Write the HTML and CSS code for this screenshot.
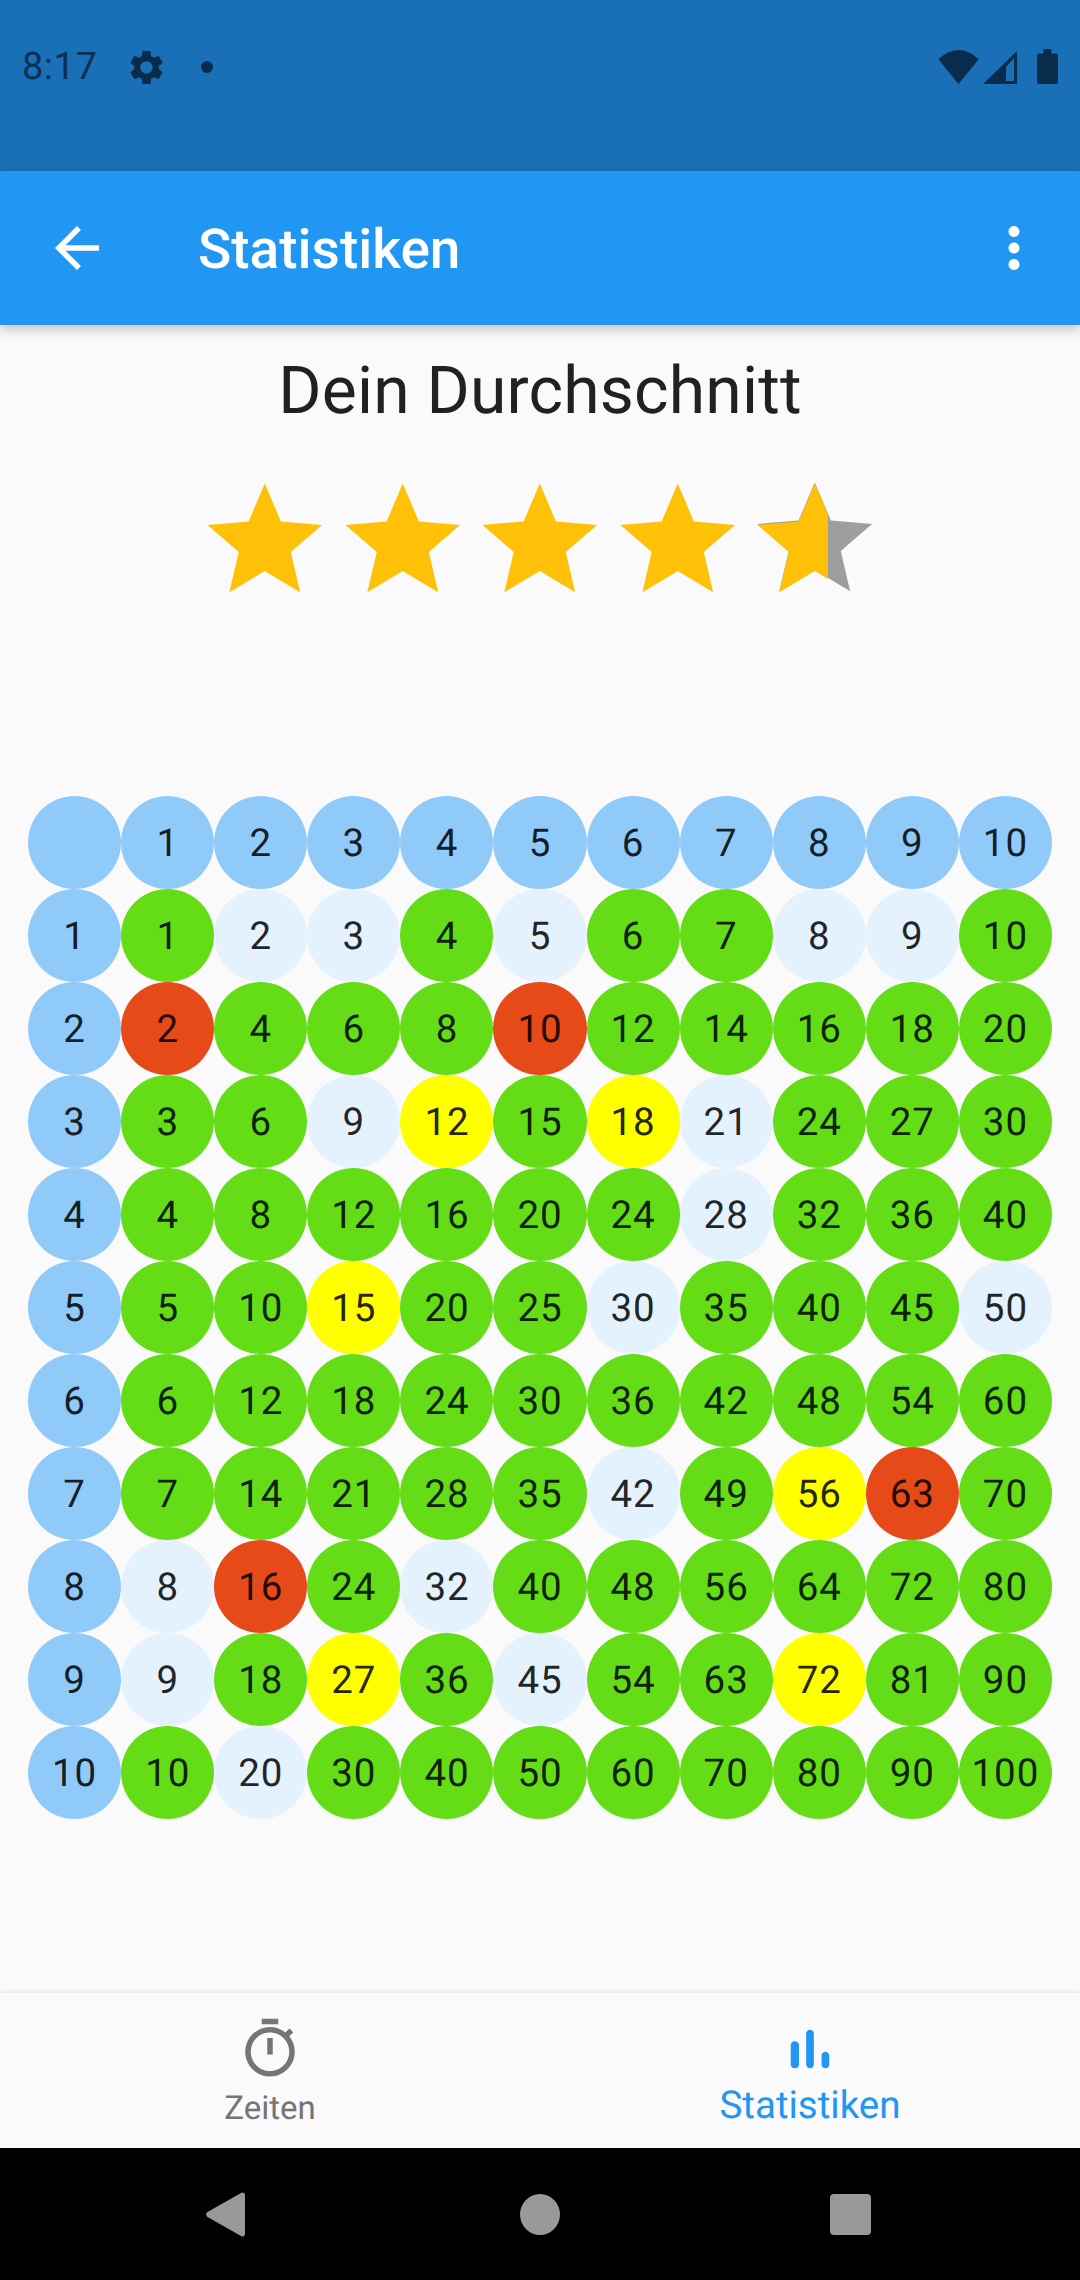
FILE: index.html
```html
<!DOCTYPE html>
<html lang="de">
  <head>
    <meta charset="UTF-8" />
    <title>Statistiken</title>
    <link rel="stylesheet" href="styles.css">
  </head>
  <body>
    <div class="screen">
      <!-- Statusleiste -->
      <div class="statusbar">
        <div class="status-left">
          <span class="clock">8:17</span>
          <svg class="status-gear" viewBox="0 0 24 24"><path d="M19.14 12.94c.04-.3.06-.61.06-.94 0-.32-.02-.64-.07-.94l2.03-1.58a.49.49 0 0 0 .12-.61l-1.92-3.32a.488.488 0 0 0-.59-.22l-2.39.96c-.5-.38-1.03-.7-1.62-.94l-.36-2.54a.484.484 0 0 0-.48-.41h-3.84c-.24 0-.43.17-.47.41l-.36 2.54c-.59.24-1.13.57-1.62.94l-2.39-.96c-.22-.08-.47 0-.59.22L2.74 8.87c-.12.21-.08.47.12.61l2.03 1.58c-.05.3-.09.63-.09.94s.02.64.07.94l-2.03 1.58a.49.49 0 0 0-.12.61l1.92 3.32c.12.22.37.29.59.22l2.39-.96c.5.38 1.03.7 1.62.94l.36 2.54c.05.24.24.41.48.41h3.84c.24 0 .44-.17.47-.41l.36-2.54c.59-.24 1.13-.56 1.62-.94l2.39.96c.22.08.47 0 .59-.22l1.92-3.32c.12-.22.07-.47-.12-.61l-2.01-1.58zM12 15.6c-1.98 0-3.6-1.62-3.6-3.6s1.62-3.6 3.6-3.6 3.6 1.62 3.6 3.6-1.62 3.6-3.6 3.6z"/></svg>
          <span class="status-dot"></span>
        </div>
        <div class="status-right">
          <svg class="status-wifi" viewBox="0 0 41 36"><path d="M20.5 35 L0.3 10.3 Q20.5 -8.3 40.7 10.3 Z"/></svg>
          <svg class="status-signal" viewBox="0 0 34 36"><path fill-rule="evenodd" d="M34 2 V35 H0 Z M31 9 L23 18 V32 H31 Z"/></svg>
          <svg class="status-battery" viewBox="0 0 21 36"><path d="M6.5 0 H14.5 V4.5 H19 A2 2 0 0 1 21 6.5 V33 A2 2 0 0 1 19 35 H2 A2 2 0 0 1 0 33 V6.5 A2 2 0 0 1 2 4.5 H6.5 Z"/></svg>
        </div>
      </div>

      <!-- Titelleiste -->
      <header class="appbar">
        <svg class="appbar-back" viewBox="0 0 24 24"><path d="M20 11H7.83l5.59-5.59L12 4l-8 8 8 8 1.41-1.41L7.83 13H20v-2z"/></svg>
        <h1 class="appbar-title">Statistiken</h1>
        <svg class="appbar-more" viewBox="0 0 24 24"><path d="M12 8c1.1 0 2-.9 2-2s-.9-2-2-2-2 .9-2 2 .9 2 2 2zm0 2c-1.1 0-2 .9-2 2s.9 2 2 2 2-.9 2-2-.9-2-2-2zm0 6c-1.1 0-2 .9-2 2s.9 2 2 2 2-.9 2-2-.9-2-2-2z"/></svg>
      </header>

      <main class="content">
        <h2 class="headline">Dein Durchschnitt</h2>

        <!-- Sterne -->
        <div class="stars">
          <svg class="star" viewBox="0 0 24 24"><path d="M12 17.27L18.18 21l-1.64-7.03L22 9.24l-7.19-.61L12 2 9.19 8.63 2 9.24l5.46 4.73L5.82 21z"/></svg>
          <svg class="star" viewBox="0 0 24 24"><path d="M12 17.27L18.18 21l-1.64-7.03L22 9.24l-7.19-.61L12 2 9.19 8.63 2 9.24l5.46 4.73L5.82 21z"/></svg>
          <svg class="star" viewBox="0 0 24 24"><path d="M12 17.27L18.18 21l-1.64-7.03L22 9.24l-7.19-.61L12 2 9.19 8.63 2 9.24l5.46 4.73L5.82 21z"/></svg>
          <svg class="star" viewBox="0 0 24 24"><path d="M12 17.27L18.18 21l-1.64-7.03L22 9.24l-7.19-.61L12 2 9.19 8.63 2 9.24l5.46 4.73L5.82 21z"/></svg>
          <div class="star-partial">
            <svg class="star star-empty" viewBox="0 0 24 24"><path d="M12 17.27L18.18 21l-1.64-7.03L22 9.24l-7.19-.61L12 2 9.19 8.63 2 9.24l5.46 4.73L5.82 21z"/></svg>
            <div class="star-fill">
              <svg class="star" viewBox="0 0 24 24"><path d="M12 17.27L18.18 21l-1.64-7.03L22 9.24l-7.19-.61L12 2 9.19 8.63 2 9.24l5.46 4.73L5.82 21z"/></svg>
            </div>
          </div>
        </div>

        <!-- Einmaleins-Tabelle -->
        <div class="table">
          <div class="cell head"></div><div class="cell head">1</div><div class="cell head">2</div><div class="cell head">3</div><div class="cell head">4</div><div class="cell head">5</div><div class="cell head">6</div><div class="cell head">7</div><div class="cell head">8</div><div class="cell head">9</div><div class="cell head">10</div>

          <div class="cell head">1</div><div class="cell good">1</div><div class="cell open">2</div><div class="cell open">3</div><div class="cell good">4</div><div class="cell open">5</div><div class="cell good">6</div><div class="cell good">7</div><div class="cell open">8</div><div class="cell open">9</div><div class="cell good">10</div>

          <div class="cell head">2</div><div class="cell bad">2</div><div class="cell good">4</div><div class="cell good">6</div><div class="cell good">8</div><div class="cell bad">10</div><div class="cell good">12</div><div class="cell good">14</div><div class="cell good">16</div><div class="cell good">18</div><div class="cell good">20</div>

          <div class="cell head">3</div><div class="cell good">3</div><div class="cell good">6</div><div class="cell open">9</div><div class="cell slow">12</div><div class="cell good">15</div><div class="cell slow">18</div><div class="cell open">21</div><div class="cell good">24</div><div class="cell good">27</div><div class="cell good">30</div>

          <div class="cell head">4</div><div class="cell good">4</div><div class="cell good">8</div><div class="cell good">12</div><div class="cell good">16</div><div class="cell good">20</div><div class="cell good">24</div><div class="cell open">28</div><div class="cell good">32</div><div class="cell good">36</div><div class="cell good">40</div>

          <div class="cell head">5</div><div class="cell good">5</div><div class="cell good">10</div><div class="cell slow">15</div><div class="cell good">20</div><div class="cell good">25</div><div class="cell open">30</div><div class="cell good">35</div><div class="cell good">40</div><div class="cell good">45</div><div class="cell open">50</div>

          <div class="cell head">6</div><div class="cell good">6</div><div class="cell good">12</div><div class="cell good">18</div><div class="cell good">24</div><div class="cell good">30</div><div class="cell good">36</div><div class="cell good">42</div><div class="cell good">48</div><div class="cell good">54</div><div class="cell good">60</div>

          <div class="cell head">7</div><div class="cell good">7</div><div class="cell good">14</div><div class="cell good">21</div><div class="cell good">28</div><div class="cell good">35</div><div class="cell open">42</div><div class="cell good">49</div><div class="cell slow">56</div><div class="cell bad">63</div><div class="cell good">70</div>

          <div class="cell head">8</div><div class="cell open">8</div><div class="cell bad">16</div><div class="cell good">24</div><div class="cell open">32</div><div class="cell good">40</div><div class="cell good">48</div><div class="cell good">56</div><div class="cell good">64</div><div class="cell good">72</div><div class="cell good">80</div>

          <div class="cell head">9</div><div class="cell open">9</div><div class="cell good">18</div><div class="cell slow">27</div><div class="cell good">36</div><div class="cell open">45</div><div class="cell good">54</div><div class="cell good">63</div><div class="cell slow">72</div><div class="cell good">81</div><div class="cell good">90</div>

          <div class="cell head">10</div><div class="cell good">10</div><div class="cell open">20</div><div class="cell good">30</div><div class="cell good">40</div><div class="cell good">50</div><div class="cell good">60</div><div class="cell good">70</div><div class="cell good">80</div><div class="cell good">90</div><div class="cell good">100</div>
        </div>
      </main>

      <!-- Untere Navigation -->
      <nav class="bottomnav">
        <div class="nav-item">
          <svg class="nav-icon nav-timer" viewBox="0 0 24 24"><path d="M15 1H9v2h6V1zm-4 13h2V8h-2v6zm8.03-6.61l1.42-1.42c-.43-.51-.9-.99-1.41-1.41l-1.42 1.42C16.07 4.74 14.12 4 12 4c-4.97 0-9 4.03-9 9s4.02 9 9 9 9-4.03 9-9c0-2.12-.74-4.07-1.97-5.61zM12 20c-3.87 0-7-3.13-7-7s3.13-7 7-7 7 3.13 7 7-3.13 7-7 7z"/></svg>
          <span class="nav-label">Zeiten</span>
        </div>
        <div class="nav-item active">
          <svg class="nav-icon" viewBox="0 0 24 24"><path d="M6.4 9.2h.2c.77 0 1.4.63 1.4 1.4v7c0 .77-.63 1.4-1.4 1.4h-.2c-.77 0-1.4-.63-1.4-1.4v-7c0-.77.63-1.4 1.4-1.4zM12 5c.77 0 1.4.63 1.4 1.4v11.2c0 .77-.63 1.4-1.4 1.4-.77 0-1.4-.63-1.4-1.4V6.4c0-.77.63-1.4 1.4-1.4zm5.6 8c.77 0 1.4.63 1.4 1.4v3.2c0 .77-.63 1.4-1.4 1.4-.77 0-1.4-.63-1.4-1.4v-3.2c0-.77.63-1.4 1.4-1.4z"/></svg>
          <span class="nav-label">Statistiken</span>
        </div>
      </nav>

      <!-- Systemleiste -->
      <div class="systembar">
        <svg class="sys-back" viewBox="0 0 39 45"><path d="M36.5 0.5 A2.5 2.5 0 0 1 39 3 V42 A2.5 2.5 0 0 1 35 44 L1.5 25 A3 3 0 0 1 1.5 20 L35 1 Z"/></svg>
        <span class="sys-home"></span>
        <span class="sys-recent"></span>
      </div>
    </div>
  </body>
</html>
```

FILE: styles.css
```css
/* Grundlayout */
* {
  box-sizing: border-box;
}

body {
  margin: 0;
  background: #fafafa;
  font-family: Roboto, sans-serif;
  color: rgba(0, 0, 0, 0.87);
  text-rendering: geometricPrecision;
}

.screen {
  width: 1080px;
  height: 2280px;
  display: flex;
  flex-direction: column;
  overflow: hidden;
}

/* Statusleiste */
.statusbar {
  height: 171px;
  flex: none;
  background: #1970b6;
  display: flex;
  justify-content: space-between;
  padding: 49px 22px 0 22px;
  fill: #0a2c4c;
  color: #0a2c4c;
}

.status-left,
.status-right {
  display: flex;
  height: 36px;
  align-items: center;
}

.clock {
  font-size: 38px;
  line-height: 36px;
  letter-spacing: 0.5px;
  margin-right: 29px;
  opacity: 0.9;
}

.status-gear {
  width: 41px;
  height: 41px;
  margin-right: 34px;
}

.status-dot {
  width: 12px;
  height: 12px;
  border-radius: 50%;
  background: #0a2c4c;
}

.status-wifi {
  width: 41px;
  height: 36px;
  margin-right: 4px;
}

.status-signal {
  width: 34px;
  height: 36px;
  margin-right: 20px;
}

.status-battery {
  width: 21px;
  height: 36px;
}

/* Titelleiste */
.appbar {
  height: 154px;
  flex: none;
  background: #2196f3;
  display: flex;
  align-items: center;
  padding: 0 33px 0 44px;
  fill: #fff;
  box-shadow: 0 5px 11px rgba(0, 0, 0, 0.22);
  position: relative;
}

.appbar-back {
  width: 66px;
  height: 66px;
  margin-right: 88px;
  flex: none;
}

.appbar-title {
  flex: 1;
  margin: 0;
  padding-top: 4px;
  font-size: 55px;
  font-weight: 500;
  color: #fff;
}

.appbar-more {
  width: 66px;
  height: 66px;
  flex: none;
}

/* Inhalt */
.content {
  flex: 1;
  display: flex;
  flex-direction: column;
  align-items: center;
  padding-top: 28px;
}

.headline {
  margin: 0;
  font-size: 66px;
  font-weight: 400;
  line-height: 78px;
  letter-spacing: 0.2px;
  color: #212121;
}

.stars {
  display: flex;
  margin-top: 41px;
  fill: #ffc107;
}

.star {
  width: 137.5px;
  height: 137.5px;
  display: block;
  flex: none;
}

.star-partial {
  position: relative;
  width: 137.5px;
  height: 137.5px;
}

.star-empty {
  fill: #9e9e9e;
  margin-top: -1px;
}

/* Anteil des letzten Sterns */
.star-fill {
  position: absolute;
  top: 0;
  left: 0;
  width: 82px;
  height: 137.5px;
  overflow: hidden;
}

/* Tabelle */
.table {
  display: grid;
  grid-template-columns: repeat(11, 93.09px);
  grid-auto-rows: 93.09px;
  margin-top: 186px;
}

.cell {
  border-radius: 50%;
  display: flex;
  align-items: center;
  justify-content: center;
  padding-top: 2px;
  font-size: 38.5px;
  letter-spacing: 0.9px;
}

.head {
  background: #90caf9;
}

.good {
  background: #64dd17;
}

.open {
  background: #e3f2fd;
}

.bad {
  background: #e64a19;
}

.slow {
  background: #ffff00;
}

/* Untere Navigation */
.bottomnav {
  height: 155px;
  flex: none;
  display: flex;
  background: #fafafa;
  box-shadow: 0 -1px 4px rgba(0, 0, 0, 0.1);
  position: relative;
}

.nav-item {
  flex: 1;
  display: flex;
  flex-direction: column;
  align-items: center;
  padding-top: 23px;
  color: #757575;
  fill: #757575;
  font-size: 33px;
}

.nav-icon {
  width: 66px;
  height: 66px;
  display: block;
}

.nav-label {
  line-height: 40px;
  margin-top: 7px;
}

.nav-item.active {
  color: #2196f3;
  fill: #2196f3;
  font-size: 38.5px;
}

.nav-item.active .nav-label {
  margin-top: 1px;
  line-height: 46px;
}

/* Systemleiste */
.systembar {
  height: 132px;
  flex: none;
  background: #000;
  display: flex;
  align-items: center;
  padding-left: 206px;
}

.sys-back {
  width: 39px;
  height: 45px;
  margin-right: 275px;
  fill: #999;
}

.sys-home {
  width: 40px;
  height: 41px;
  margin-right: 270px;
  border-radius: 50%;
  background: #999;
}

.sys-recent {
  width: 41px;
  height: 41px;
  border-radius: 4px;
  background: #999;
}
```
